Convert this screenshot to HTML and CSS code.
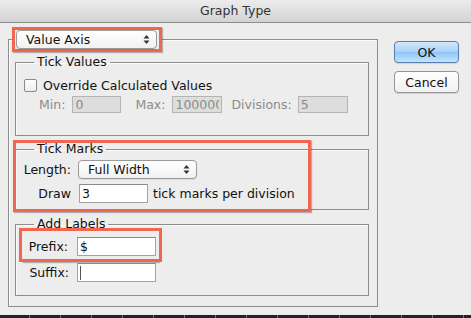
FILE: index.html
```html
<!DOCTYPE html>
<html lang="en">
<head>
    <meta charset="UTF-8">
    <title>Graph Type</title>
    <link rel="stylesheet" href="styles.css">
</head>
<body>
    <div class="window">
        <div class="titlebar">Graph Type</div>

        <div class="dialog">
            <fieldset class="group outer">
                <legend class="outer-legend">
                    <span class="mark">
                        <span class="popup popup-axis">Value Axis
                            <svg class="arrows" width="7" height="11" viewBox="0 0 7 11"><path d="M3.5 1 L6.5 4.5 H0.5 Z M3.5 10 L6.5 6.5 H0.5 Z" fill="#333"/></svg>
                        </span>
                    </span>
                </legend>

                <fieldset class="group tick-values">
                    <legend>Tick Values</legend>
                    <label class="check-row"><span class="checkbox"></span>Override Calculated Values</label>
                    <div class="range-row">
                        <span class="dim min-label">Min:</span>
                        <input class="field field-off field-min" type="text" value="0" disabled>
                        <span class="dim max-label">Max:</span>
                        <input class="field field-off field-max" type="text" value="1000000" disabled>
                        <span class="dim div-label">Divisions:</span>
                        <input class="field field-off field-div" type="text" value="5" disabled>
                    </div>
                </fieldset>

                <div class="highlight-wrap tick-marks-wrap">
                    <fieldset class="group tick-marks">
                        <legend>Tick Marks</legend>
                        <div class="form-grid">
                            <span class="label">Length:</span>
                            <span class="popup popup-length">Full Width
                                <svg class="arrows" width="7" height="11" viewBox="0 0 7 11"><path d="M3.5 1 L6.5 4.5 H0.5 Z M3.5 10 L6.5 6.5 H0.5 Z" fill="#333"/></svg>
                            </span>
                            <span class="label">Draw</span>
                            <span class="draw-cell">
                                <input class="field field-draw" type="text" value="3">
                                <span>tick marks per division</span>
                            </span>
                        </div>
                    </fieldset>
                    <div class="highlight tick-marks-mark"></div>
                </div>

                <fieldset class="group add-labels">
                    <legend>Add Labels</legend>
                    <div class="label-row prefix-row">
                        <span class="label">Prefix:</span>
                        <input class="field field-label" type="text" value="$">
                    </div>
                    <div class="label-row suffix-row">
                        <span class="label">Suffix:</span>
                        <span class="field field-label field-caret"><span class="caret"></span></span>
                    </div>
                </fieldset>
            </fieldset>

            <div class="buttons">
                <button class="btn btn-default">OK</button>
                <button class="btn">Cancel</button>
            </div>
        </div>

        <div class="dock"></div>
    </div>
</body>
</html>
```

FILE: styles.css
```css
body {
    margin: 0;
    background: #ededed;
    font-family: "DejaVu Sans", sans-serif;
    font-size: 12.5px;
    color: #111;
}

.window {
    width: 471px;
    height: 318px;
    display: flex;
    flex-direction: column;
    overflow: hidden;
}

.titlebar {
    height: 22px;
    line-height: 22px;
    text-align: center;
    color: #333;
    background: linear-gradient(#ececec, #d3d3d3);
    border-bottom: 1px solid #8c8c8c;
    flex-shrink: 0;
}

.dialog {
    display: flex;
    align-items: flex-start;
    padding: 4px 0 0 8px;
    flex: 1;
}

/* group boxes */
.group {
    margin: 0;
    border: 1px solid #8d8d8d;
    box-shadow: inset 1px 1px 0 #fafafa;
    padding: 0;
    min-width: 0;
}

.group legend {
    margin-left: 18px;
    padding: 0 3px;
    line-height: 14px;
}

.outer {
    width: 370px;
    box-sizing: border-box;
    padding: 0 8px 10px 3px;
}

.outer > legend.outer-legend {
    margin-left: 0;
    padding: 0;
    line-height: 0;
}

.outer > .group,
.outer > .highlight-wrap {
    margin-left: 3px;
}

.mark {
    display: inline-block;
    border: 3px solid #f2654f;
    padding: 0 2px 0 1px;
    box-shadow: 1px 1px 1px rgba(0, 0, 0, 0.25);
}

/* popup buttons */
.popup {
    display: inline-flex;
    align-items: center;
    justify-content: space-between;
    box-sizing: border-box;
    height: 19px;
    line-height: 17px;
    padding: 0 6px 0 9px;
    border: 1px solid #9a9a9a;
    border-radius: 4px;
    background: linear-gradient(#ffffff, #f1f1f1);
    box-shadow: 0 1px 0 rgba(0, 0, 0, 0.08);
    vertical-align: top;
}

.popup-axis {
    width: 141px;
}

.popup-length {
    width: 119px;
}

.arrows {
    flex-shrink: 0;
}

/* Tick Values */
.tick-values {
    margin-top: 3px;
}

.check-row {
    display: flex;
    align-items: center;
    height: 16px;
    margin: 8px 0 0 8px;
}

.checkbox {
    width: 13px;
    height: 13px;
    box-sizing: border-box;
    border: 1px solid #8a8a8a;
    border-radius: 2px;
    background: linear-gradient(#ffffff, #ececec);
    margin-right: 6px;
}

.range-row {
    display: flex;
    align-items: center;
    margin: 3px 0 22px 23px;
}

.dim {
    color: #8b8b8b;
}

.field {
    box-sizing: border-box;
    font: inherit;
    color: #111;
    background: #fff;
    border: 1px solid #a3a3a3;
    border-top-color: #8a8a8a;
    padding: 0 2px;
    margin: 0;
    outline: none;
}

.field-off {
    height: 17px;
    background: #dddddd;
    border-color: #b5b5b5;
    color: #8b8b8b;
    width: 49px;
}

.field-min {
    margin-left: 7px;
}

.max-label {
    margin-left: 14px;
}

.field-max {
    margin-left: 7px;
    width: 50px;
}

.div-label {
    margin-left: 9px;
}

.field-div {
    margin-left: 6px;
    width: 50px;
}

/* Tick Marks */
.highlight-wrap {
    position: relative;
}

.tick-marks-wrap {
    margin-top: 6px;
}

.highlight {
    position: absolute;
    border: 3px solid #f2654f;
    box-shadow: 1px 1px 1px rgba(0, 0, 0, 0.25);
    pointer-events: none;
}

.tick-marks-mark {
    top: -2px;
    left: -2px;
    width: 292px;
    height: 66px;
}

.form-grid {
    display: grid;
    grid-template-columns: 55px auto;
    column-gap: 7px;
    row-gap: 5px;
    align-items: center;
    margin: 4px 0 6px 0;
}

.form-grid .label {
    text-align: right;
}

.draw-cell {
    display: flex;
    align-items: center;
}

.field-draw {
    width: 69px;
    height: 19px;
    margin-left: 1px;
    margin-right: 5px;
}

/* Add Labels */
.add-labels {
    margin-top: 7px;
    padding-bottom: 13px;
}

.label-row {
    display: flex;
    align-items: center;
}

.label-row .label {
    width: 47px;
    text-align: right;
    margin-right: 8px;
}

.prefix-row {
    width: 137px;
    box-sizing: border-box;
    margin-left: 6px;
    padding: 6px 0 3px 0;
    box-shadow: 0 0 0 3px #f2654f, 1px 4px 1px 0 rgba(0, 0, 0, 0.25);
}

.prefix-row .label {
    width: 46px;
    margin-right: 9px;
}

.suffix-row {
    margin: 4px 0 0 6px;
}

.field-label {
    width: 79px;
    height: 19px;
}

.field-caret {
    display: flex;
    align-items: center;
}

.caret {
    width: 1px;
    height: 14px;
    background: #555;
}

/* buttons */
.buttons {
    display: flex;
    flex-direction: column;
    gap: 8px;
    margin: 14px 0 0 16px;
}

.btn {
    width: 65px;
    height: 22px;
    font: inherit;
    color: #111;
    padding: 0;
    border: 1px solid #959595;
    border-radius: 4px;
    background: linear-gradient(#ffffff, #f0f0f0);
    box-shadow: 0 1px 1px rgba(0, 0, 0, 0.12);
}

.btn-default {
    border-color: #5a7fae;
    background: linear-gradient(#d3e9fc 0%, #a8d2f7 50%, #90c5f4 51%, #c4e4fd 100%);
}

.dock {
    height: 3px;
    flex-shrink: 0;
    background: #232323 repeating-linear-gradient(90deg, transparent 0, transparent 29px, #777 29px, #777 30px, transparent 30px, transparent 31px);
}
```
